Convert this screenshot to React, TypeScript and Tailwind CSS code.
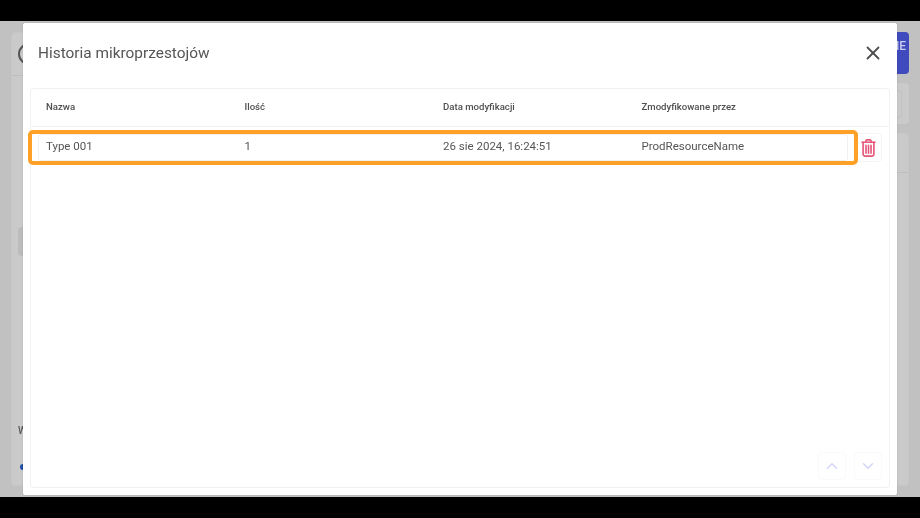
import React from "react";
import { X, ChevronUp, ChevronDown } from "lucide-react";

const TrashIcon = () => (
  <svg width="15" height="18" viewBox="0 0 16 20" fill="none" stroke="#e4567a" strokeWidth="1.8" strokeLinecap="round" strokeLinejoin="round">
    <path d="M0.8 3.6h14.4" />
    <path d="M5 3.4c0-1.6.6-2.4 1.600-2.400h2.800c1 0 1.600.8 1.600 2.400" />
    <path d="M2 3.800v12.600c0 1.500 1 2.600 2.400 2.600h7.200c1.400 0 2.400-1.100 2.400-2.600V3.800" />
    <path d="M5.200 7v8.800M8 7v8.800M10.800 7v8.800" />
  </svg>
);

const columns = ["Nazwa", "Ilość", "Data modyfikacji", "Zmodyfikowane przez"];
const row = ["Type 001", "1", "26 sie 2024, 16:24:51", "ProdResourceName"];

const App: React.FC = () => {
  return (
    <div className="w-[920px] h-[518px] bg-black overflow-hidden">
      <div className="w-full h-full flex flex-col bg-black blur-[0.4px] font-['Roboto',sans-serif]">
        <div className="h-[21px] shrink-0 bg-black" />
        <div className="relative flex-1 bg-[#c1c1c1] flex justify-between gap-4 pl-[11px] pr-[11px] pt-[11px] pb-[11px]">
          {/* Page behind the dialog */}
          <div className="w-[300px] bg-[#cacaca] rounded-[4px] border border-[#c6c6c6] flex flex-col">
            <div className="h-[43px] border-b border-[#bdbdbd] px-[6px] flex items-center shrink-0">
              <div className="w-[24px] h-[22px] rounded-full border-2 border-[#555555]" />
            </div>
            <div className="flex-1 flex flex-col px-[6px]">
              <div className="mt-[151px] w-[20px] h-[29px] rounded-[4px] bg-[#bcbcbc]" />
              <div className="mt-[169px] text-[10px] leading-[12px] text-[#555555] font-medium">W</div>
              <div className="mt-[27px] ml-[2px] w-[6px] h-[6px] rounded-full bg-[#1f4fa8]" />
            </div>
          </div>
          <div className="w-[50px] flex flex-col gap-[9px]">
            <div className="h-[42px] rounded-[4px] bg-[#3f4bbd] flex items-start justify-end pt-[7px] pr-[3px] text-[12px] leading-[14px] font-medium text-[#c9cdef]">
              NE
            </div>
            <div className="h-[41px] rounded-[4px] bg-[#cacaca] flex items-center pr-[7px]">
              <div className="w-full h-[28px] rounded-[4px] border border-[#c2c2c2]" />
            </div>
            <div className="flex-1 rounded-[4px] bg-[#cacaca] border border-[#c6c6c6] pt-[38px]">
              <div className="border-t border-[#bdbdbd]" />
            </div>
          </div>

          {/* Dialog */}
          <div className="absolute left-[23px] top-[2px] w-[874px] h-[472px] bg-white rounded-[2px] shadow-[0_0_2px_rgba(0,0,0,0.15)] flex flex-col px-[7px] pb-[7px]">
            <div className="h-[65px] shrink-0 flex items-center justify-between pl-[8px] pr-[6px] pb-[5px]">
              <h2 className="text-[15.4px] leading-[20px] text-[#555555] font-normal">Historia mikroprzestojów</h2>
              <button className="text-[#4f4f4f]">
                <X size={22} strokeWidth={2} />
              </button>
            </div>
            <div className="flex-1 rounded-[4px] border border-[#f1f1f1] flex flex-col">
              <div className="h-[38px] shrink-0 border-b border-[#f3f3f3] pl-[15px] grid grid-cols-[198.500px_198.500px_198.500px_1fr] items-center">
                {columns.map((c) => (
                  <div key={c} className="text-[9.6px] font-medium text-[#4f4f4f]">{c}</div>
                ))}
              </div>
              <div className="flex gap-[6px] pl-[7px] mt-[7px]">
                <div className="relative w-[810px] h-[27px] rounded-[3px] border border-[#f0f0f0] pl-[7px] pb-[1px] grid grid-cols-[198.500px_198.500px_198.500px_1fr] items-center">
                  {row.map((c) => (
                    <div key={c} className="text-[11.5px] text-[#555555]">{c}</div>
                  ))}
                  {/* Orange highlight */}
                  <div className="absolute -left-[11px] -right-[11px] -top-[5px] -bottom-[5px] rounded-[5px] border-[4px] border-[#ffa126]" />
                </div>
                <button className="w-[28px] h-[29px] -mt-[1px] rounded-[4px] border border-[#f4f4f4] flex items-center justify-center">
                  <TrashIcon />
                </button>
              </div>
              <div className="mt-auto flex justify-end gap-[8px] pr-[7px] pb-[7px]">
                <button className="w-[28px] h-[28px] rounded-[4px] border border-[#fafafa] flex items-center justify-center text-[#d3d6fa]">
                  <ChevronUp size={18} strokeWidth={2} />
                </button>
                <button className="w-[28px] h-[28px] rounded-[4px] border border-[#fafafa] flex items-center justify-center text-[#d3d6fa]">
                  <ChevronDown size={18} strokeWidth={2} />
                </button>
              </div>
            </div>
          </div>
        </div>
        <div className="h-[21px] shrink-0 bg-black" />
      </div>
    </div>
  );
};

export default App;
